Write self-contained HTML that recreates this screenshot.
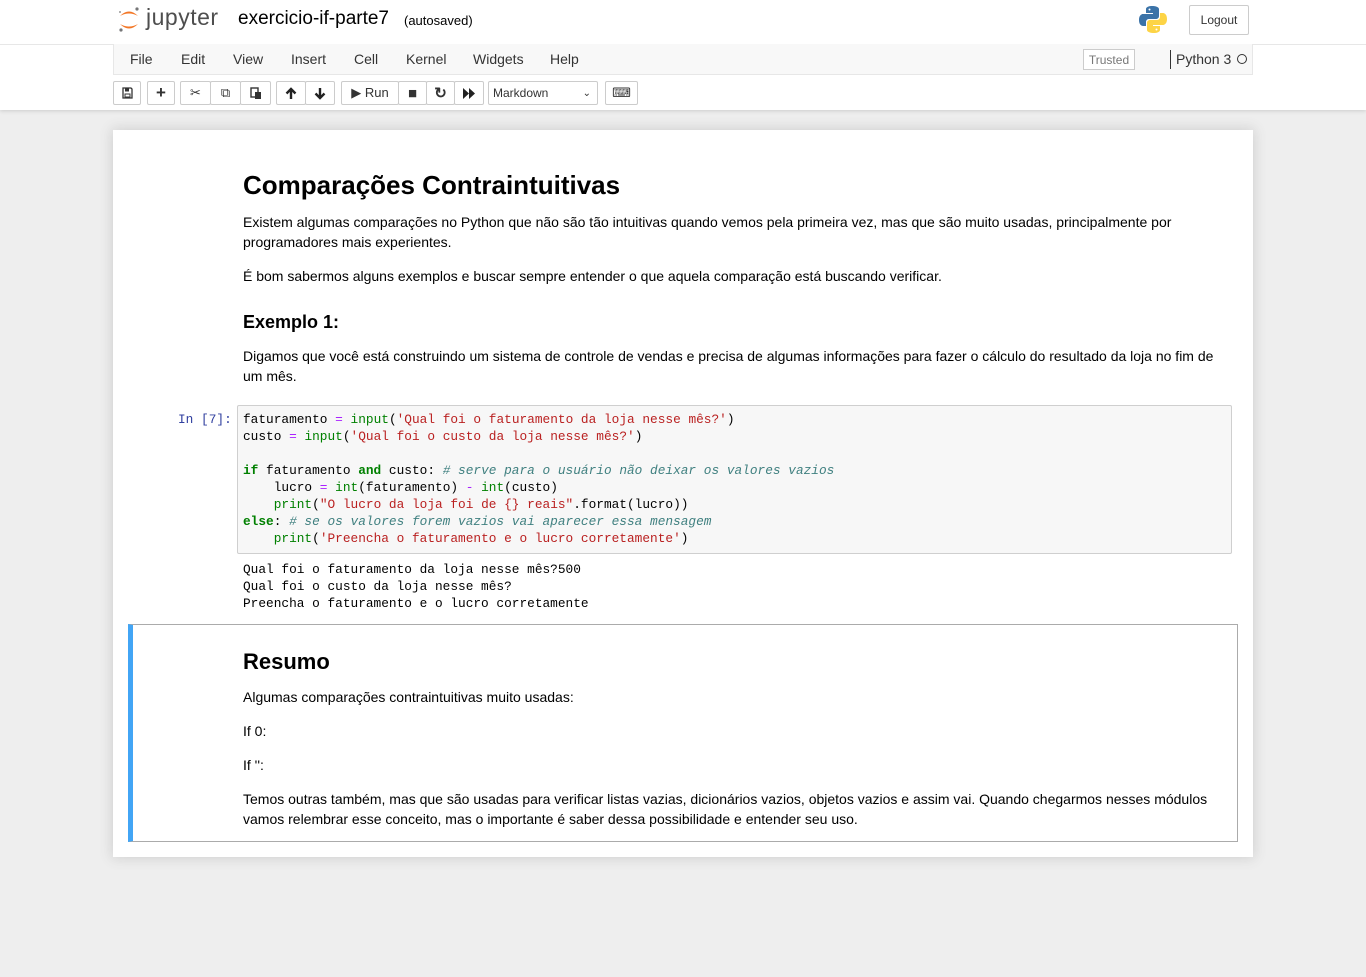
<!DOCTYPE html>
<html><head><meta charset="utf-8"><style>
*{box-sizing:border-box}
body{margin:0;background:#eee;font-family:"Liberation Sans",Arial,sans-serif;font-size:13px;color:#000;width:1366px;height:977px;overflow:hidden;position:relative}
#hdr{position:absolute;left:0;top:0;width:1366px;height:110px;background:#fff;box-shadow:0 1px 4px rgba(0,0,0,.15)}
.abs{position:absolute}
#menubar{left:113px;top:44px;width:1140px;height:31px;background:#f8f8f8;border:1px solid #e7e7e7;border-top:0}
#menubar span.m{position:absolute;top:7px;font-size:14px;color:#333}
.btn{position:absolute;top:81px;height:24px;border:1px solid #ccc;background:#fff;border-radius:2px;font-size:13px;color:#333;display:flex;align-items:center;justify-content:center}
#nb{left:113px;top:130px;width:1140px;height:727px;background:#fff;box-shadow:0 0 12px 1px rgba(87,87,87,.2)}
.t{position:absolute;left:243px;font-size:14px;color:#000;line-height:20px}
h1,h2{margin:0;font-weight:bold}
pre{margin:0;font-family:"Liberation Mono",monospace;font-size:12.8px;line-height:17px}
.k{color:#008000;font-weight:bold}.o{color:#aa22ff}.s{color:#ba2121}.c{color:#408080;font-style:italic}.b{color:#008000}
</style></head><body>
<div id="hdr">
<svg class="abs" style="left:117px;top:5px" width="24" height="28" viewBox="0 0 24 28">
<path d="M3 11 Q12 2 21 11 Q12 6 3 11Z" fill="#f37726"/><path d="M3 19 Q12 28 21 19 Q12 24 3 19Z" fill="#f37726"/>
<circle cx="20" cy="4" r="1.6" fill="#767677"/><circle cx="4" cy="25" r="1.6" fill="#767677"/><circle cx="3" cy="7" r="1" fill="#989798"/></svg>
<div class="abs" style="left:146px;top:4px;font-size:23px;color:#4e4e4e;letter-spacing:.5px">jupyter</div>
<div class="abs" style="left:238px;top:8px;font-size:19px;color:#000">exercicio-if-parte7</div>
<div class="abs" style="left:404px;top:13px;font-size:13px;color:#000">(autosaved)</div>
<svg class="abs" style="left:1139px;top:5px" width="28" height="29" viewBox="0 0 28 29">
<path d="M13 1c-6 0-6 3-6 3v4h7v1H4S0 9 0 15s4 6 4 6h3v-4s0-3 3-3h7s3 0 3-3V4s0-3-7-3z" fill="#3b73a8"/>
<path d="M15 28c6 0 6-3 6-3v-4h-7v-1h10s4 0 4-6-4-6-4-6h-3v4s0 3-3 3h-7s-3 0-3 3v7s0 3 7 3z" fill="#fdd446"/>
<circle cx="10.5" cy="4.5" r="1" fill="#fff"/><circle cx="17.5" cy="24.5" r="1" fill="#fff"/></svg>
<div class="abs" style="left:1189px;top:5px;width:60px;height:30px;border:1px solid #ccc;border-radius:2px;font-size:12px;color:#333;display:flex;align-items:center;justify-content:center">Logout</div>
<div class="abs" style="left:0;top:44px;width:1366px;height:1px;background:#e7e7e7"></div>
<div id="menubar" class="abs">
<span class="m" style="left:16px">File</span><span class="m" style="left:67px">Edit</span><span class="m" style="left:119px">View</span><span class="m" style="left:177px">Insert</span><span class="m" style="left:240px">Cell</span><span class="m" style="left:292px">Kernel</span><span class="m" style="left:359px">Widgets</span><span class="m" style="left:436px">Help</span>
<span class="abs" style="left:969px;top:5px;width:52px;height:21px;border:1px solid #ccc;font-size:12px;color:#777;display:flex;align-items:center;justify-content:center;background:#fff">Trusted</span>
<span class="abs" style="left:1056px;top:6px;width:1px;height:19px;background:#333"></span>
<span class="m" style="left:1062px;color:#333">Python 3</span>
<span class="abs" style="left:1123px;top:10px;width:10px;height:10px;border:1.5px solid #333;border-radius:50%"></span>
</div>
<div class="btn" style="left:113px;width:28px"><svg width="11" height="12" viewBox="0 0 11 12"><path d="M1 1h8l1 1v9H1z" fill="none" stroke="#333" stroke-width="1.3"/><rect x="3" y="1.5" width="4" height="3" fill="#333"/><rect x="3" y="7" width="5" height="3" fill="none" stroke="#333"/></svg></div>
<div class="btn" style="left:147px;width:28px;font-weight:bold;font-size:17px">+</div>
<div class="btn" style="left:180px;width:31px">✂</div><div class="btn" style="left:210px;width:31px">⧉</div>
<div class="btn" style="left:240px;width:31px"><svg width="12" height="13" viewBox="0 0 12 13"><rect x="1" y="1" width="7" height="9" fill="none" stroke="#333" stroke-width="1.4"/><rect x="5" y="5" width="6" height="7" fill="#333"/></svg></div>
<div class="btn" style="left:276px;width:30px"><svg width="12" height="13" viewBox="0 0 12 13"><path d="M6 12V2M1.5 6.5L6 2l4.5 4.5" fill="none" stroke="#222" stroke-width="2.4"/></svg></div>
<div class="btn" style="left:305px;width:30px"><svg width="12" height="13" viewBox="0 0 12 13"><path d="M6 1v10M1.5 6.5L6 11l4.5-4.5" fill="none" stroke="#222" stroke-width="2.4"/></svg></div>
<div class="btn" style="left:341px;width:58px">▶&nbsp;Run</div><div class="btn" style="left:398px;width:29px;font-size:15px">■</div><div class="btn" style="left:426px;width:29px;font-weight:bold;font-size:15px">↻</div>
<div class="btn" style="left:454px;width:30px"><svg width="13" height="11" viewBox="0 0 13 11"><path d="M0 0l6 5.5L0 11zM6 0l6 5.5L6 11z" fill="#222"/></svg></div>
<div class="btn" style="left:488px;width:110px;justify-content:space-between;padding:0 6px 0 4px;font-size:12px"><span>Markdown</span><span style="font-size:10px">⌄</span></div>
<div class="btn" style="left:605px;width:33px">⌨</div>
</div>
<div id="nb" class="abs"></div>
<h1 class="t" style="top:170px;font-size:26px;line-height:30px">Comparações Contraintuitivas</h1>
<div class="t" style="top:212px;width:960px">Existem algumas comparações no Python que não são tão intuitivas quando vemos pela primeira vez, mas que são muito usadas, principalmente por programadores mais experientes.</div>
<div class="t" style="top:266px">É bom sabermos alguns exemplos e buscar sempre entender o que aquela comparação está buscando verificar.</div>
<h2 class="t" style="top:312px;font-size:18px">Exemplo 1:</h2>
<div class="t" style="top:346px;width:990px">Digamos que você está construindo um sistema de controle de vendas e precisa de algumas informações para fazer o cálculo do resultado da loja no fim de um mês.</div>
<pre class="abs" style="left:178px;top:411px;color:#303f9f">In [7]:</pre>
<div class="abs" style="left:237px;top:405px;width:995px;height:149px;background:#f7f7f7;border:1px solid #cfcfcf;border-radius:2px"></div>
<pre class="abs" style="left:243px;top:411px">faturamento <span class="o">=</span> <span class="b">input</span>(<span class="s">'Qual foi o faturamento da loja nesse mês?'</span>)
custo <span class="o">=</span> <span class="b">input</span>(<span class="s">'Qual foi o custo da loja nesse mês?'</span>)

<span class="k">if</span> faturamento <span class="k">and</span> custo: <span class="c"># serve para o usuário não deixar os valores vazios</span>
    lucro <span class="o">=</span> <span class="b">int</span>(faturamento) <span class="o">-</span> <span class="b">int</span>(custo)
    <span class="b">print</span>(<span class="s">"O lucro da loja foi de {} reais"</span>.format(lucro))
<span class="k">else</span>: <span class="c"># se os valores forem vazios vai aparecer essa mensagem</span>
    <span class="b">print</span>(<span class="s">'Preencha o faturamento e o lucro corretamente'</span>)</pre>
<pre class="abs" style="left:243px;top:561px">Qual foi o faturamento da loja nesse mês?500
Qual foi o custo da loja nesse mês?
Preencha o faturamento e o lucro corretamente</pre>
<div class="abs" style="left:128px;top:624px;width:1110px;height:218px;border:1px solid #ababab;border-left:5px solid #42a5f5"></div>
<h2 class="t" style="top:648px;font-size:22px;line-height:28px">Resumo</h2>
<div class="t" style="top:687px">Algumas comparações contraintuitivas muito usadas:</div>
<div class="t" style="top:721px">If 0:</div>
<div class="t" style="top:755px">If '':</div>
<div class="t" style="top:789px;width:980px">Temos outras também, mas que são usadas para verificar listas vazias, dicionários vazios, objetos vazios e assim vai. Quando chegarmos nesses módulos vamos relembrar esse conceito, mas o importante é saber dessa possibilidade e entender seu uso.</div>
</body></html>
